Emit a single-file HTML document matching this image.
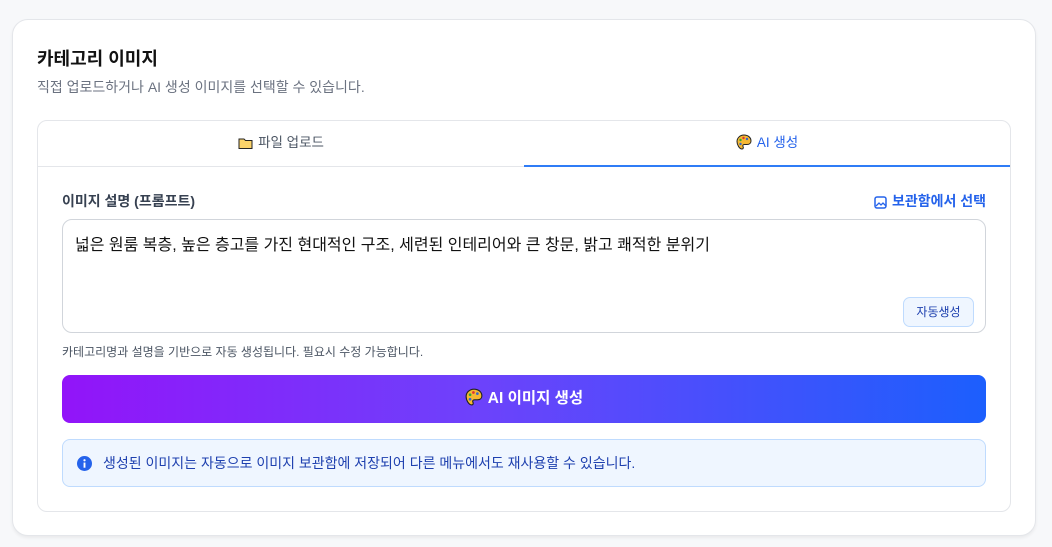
<!DOCTYPE html>
<html><head><meta charset="utf-8"><style>
*{box-sizing:border-box;margin:0;padding:0}
body{width:1052px;height:547px;background:#f7f8fa;font-family:"Liberation Sans","Noto Sans CJK KR",sans-serif;position:relative;overflow:hidden}
.outer{position:absolute;left:12px;top:19px;width:1024px;height:517px;background:#fff;border:1px solid #e4e6ea;border-radius:16px;box-shadow:0 2px 3px rgba(0,0,0,.06)}
.t1{position:absolute;left:37px;top:45px;font-size:18px;font-weight:bold;color:#111}
.t2{position:absolute;left:37px;top:77px;font-size:14px;color:#6b7280}
.inner{position:absolute;left:37px;top:120px;width:974px;height:392px;border:1px solid #e4e6ea;border-radius:10px;background:#fff}
.tabs{position:absolute;left:0;top:0;width:972px;height:46px;border-bottom:1px solid #e4e6ea}
.tab{position:absolute;top:0;height:46px;line-height:44px;font-size:13.5px;text-align:center;width:486px}
.tab1{left:0;color:#4b5563}
.tab2{left:486px;color:#2563eb;border-bottom:2px solid #2f7cf6;height:46px}
.ic{display:inline-block;vertical-align:-3px;margin-right:5px}
.lbl{position:absolute;left:62px;top:191px;font-size:14px;font-weight:bold;color:#374151}
.lib{position:absolute;right:66px;top:191px;font-size:14px;font-weight:bold;color:#2563eb}
.ta{position:absolute;left:62px;top:219px;width:924px;height:114px;border:1px solid #d1d5db;border-radius:10px;padding:11px 12px;font-size:16px;color:#111}
.auto{position:absolute;left:903px;top:297px;width:71px;height:30px;border:1px solid #bfdbfe;background:#eff6ff;border-radius:7px;font-size:12px;color:#1e40af;text-align:center;line-height:28px}
.help{position:absolute;left:62px;top:343px;font-size:12px;color:#4b5563}
.gen{position:absolute;left:62px;top:375px;width:924px;height:48px;border-radius:8px;background:linear-gradient(90deg,#9214f9,#6d42fb 45%,#1c5ffd);color:#fff;font-size:15.5px;font-weight:bold;text-align:center;line-height:48px}
.info{position:absolute;left:62px;top:439px;width:924px;height:48px;border:1px solid #bfdbfe;background:#eff6ff;border-radius:8px;font-size:14px;color:#1e40af;line-height:46px;padding-left:40px}
.info svg{position:absolute;left:14px;top:16px}
</style></head><body>
<div class="outer"></div>
<div class="t1">카테고리 이미지</div>
<div class="t2">직접 업로드하거나 AI 생성 이미지를 선택할 수 있습니다.</div>
<div class="inner">
 <div class="tabs">
  <div class="tab tab1"><svg class="ic" width="15" height="13" viewBox="0 0 15 13"><path d="M1 2h5l1.5 1.5H14v8H1z" fill="#fcd46a" stroke="#222" stroke-width="1"/></svg>파일 업로드</div>
  <div class="tab tab2"><svg class="ic" width="16" height="16" viewBox="0 0 16 16"><path d="M8 1C4 1 1 4 1 7.5S3.5 15 6 15c1.5 0 1.5-1.5 1-2.5s0-2 1.5-2 H11c2.5 0 4-1.5 4-3.5C15 3.5 12 1 8 1z" fill="#f5b833" stroke="#222" stroke-width="1"/><circle cx="4.5" cy="6" r="1.2" fill="#3a3"/><circle cx="7.5" cy="4" r="1.2" fill="#d33"/><circle cx="11" cy="5" r="1.2" fill="#36c"/><circle cx="4.5" cy="10" r="1.2" fill="#36c"/></svg>AI 생성</div>
 </div>
</div>
<div class="lbl">이미지 설명 (프롬프트)</div>
<div class="lib"><svg class="ic" width="13" height="13" viewBox="0 0 13 13" style="margin-right:5px"><rect x="1" y="1" width="11" height="11" rx="2" fill="none" stroke="#2563eb" stroke-width="1.5"/><path d="M2 10l3-3 2 2 2-2 3 3" fill="none" stroke="#2563eb" stroke-width="1.3"/></svg>보관함에서 선택</div>
<div class="ta">넓은 원룸 복층, 높은 층고를 가진 현대적인 구조, 세련된 인테리어와 큰 창문, 밝고 쾌적한 분위기</div>
<div class="auto">자동생성</div>
<div class="help">카테고리명과 설명을 기반으로 자동 생성됩니다. 필요시 수정 가능합니다.</div>
<div class="gen"><svg class="ic" width="18" height="18" viewBox="0 0 16 16"><path d="M8 1C4 1 1 4 1 7.5S3.5 15 6 15c1.5 0 1.5-1.5 1-2.5s0-2 1.5-2 H11c2.5 0 4-1.5 4-3.5C15 3.5 12 1 8 1z" fill="#f5b833" stroke="#222" stroke-width="1"/><circle cx="4.5" cy="6" r="1.2" fill="#3a3"/><circle cx="7.5" cy="4" r="1.2" fill="#d33"/><circle cx="11" cy="5" r="1.2" fill="#36c"/><circle cx="4.5" cy="10" r="1.2" fill="#36c"/></svg>AI 이미지 생성</div>
<div class="info"><svg width="15" height="15" viewBox="0 0 16 16"><circle cx="8" cy="8" r="8" fill="#2563eb"/><circle cx="8" cy="4.5" r="1.2" fill="#fff"/><rect x="7" y="7" width="2" height="5.5" fill="#fff"/></svg>생성된 이미지는 자동으로 이미지 보관함에 저장되어 다른 메뉴에서도 재사용할 수 있습니다.</div>
</body></html>
